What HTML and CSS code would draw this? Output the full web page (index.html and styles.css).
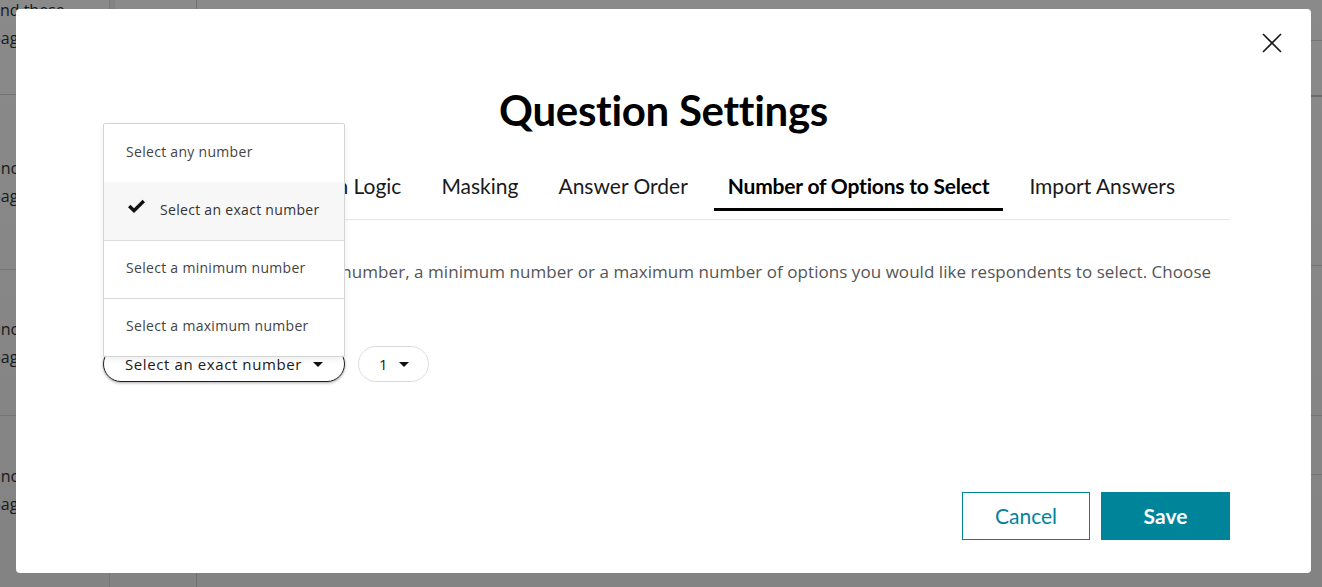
FILE: index.html
```html
<!DOCTYPE html>
<html lang="en">
<head>
<meta charset="utf-8">
<title>Question Settings</title>
<link rel="stylesheet" href="styles.css">
</head>
<body>
<div class="page">
  <div class="col col-a">
    <div class="cell cell-0"><p>and these</p><p>page</p></div>
    <div class="cell cell-1"><p>once</p><p>page</p></div>
    <div class="cell cell-2"><p>once</p><p>page</p></div>
    <div class="cell cell-3"><p>once</p><p>page</p></div>
  </div>
  <div class="col col-strip"></div>
  <div class="col col-b"></div>
  <div class="col col-c">
    <div class="rrow r0"></div>
    <div class="rrow r1"></div>
    <div class="rrow r2"></div>
    <div class="rrow r3"></div>
    <div class="rrow r4"></div>
  </div>
</div>
<div class="overlay"></div>

<div class="modal">
  <button class="close" aria-label="Close">
    <svg width="20" height="20" viewBox="0 0 20 20"><path d="M1 1 L19 19 M19 1 L1 19" stroke="#1a1a1a" stroke-width="1.6" fill="none"/></svg>
  </button>
  <h1 class="title">Question Settings</h1>
  <nav class="tabs">
    <span class="tab">Validation</span>
    <span class="tab">Option Logic</span>
    <span class="tab">Masking</span>
    <span class="tab">Answer Order</span>
    <span class="tab active">Number of Options to Select</span>
    <span class="tab">Import Answers</span>
  </nav>
  <p class="desc">Specify if you'd want an exact number, a minimum number or a maximum number of options you would like respondents to select. Choose<br>from the options below.</p>
  <div class="selects">
    <button class="pill pill-main">Select an exact number <span class="caret"></span></button>
    <button class="pill pill-num">1 <span class="caret"></span></button>
  </div>
  <div class="footer">
    <button class="btn btn-cancel">Cancel</button>
    <button class="btn btn-save">Save</button>
  </div>
  <ul class="menu">
    <li class="item">Select any number</li>
    <li class="item selected"><svg class="check" width="19" height="15" viewBox="0 0 19 15"><path d="M1 8.2 L3.4 5.8 L7 9.2 L15.6 0.8 L18 3.2 L7 14 Z" fill="#111"/></svg>Select an exact number</li>
    <li class="item">Select a minimum number</li>
    <li class="item">Select a maximum number</li>
  </ul>
</div>
</body>
</html>
```

FILE: styles.css
```css
* { box-sizing: border-box; }

body {
  margin: 0;
  width: 1322px;
  height: 587px;
  overflow: hidden;
  position: relative;
  font-family: "Open Sans", "Liberation Sans", sans-serif;
  background: #fff;
}

/* underlying page */
.page {
  display: flex;
  height: 587px;
  background: linear-gradient(#ffffff, #f2f2f2);
}
.col { height: 100%; }
.col-a { width: 109px; display: flex; flex-direction: column; overflow: hidden; }
.col-strip { width: 6px; background: #f3f3f3; border-left: 1px solid #dcdcdc; }
.col-b { width: 82px; border-right: 1px solid #d0d0d0; }
.col-c { flex: 1; display: flex; flex-direction: column; }

.cell { border-bottom: 1px solid #d6d6d6; display: flex; flex-direction: column; justify-content: center; gap: 8px; }
.cell p { margin: 0 0 0 -9px; font-size: 16px; line-height: 20px; color: #333; white-space: nowrap; font-family: "Open Sans", sans-serif; }
.cell-0 { height: 95px; justify-content: flex-start; }
.cell-1 { height: 175px; }
.cell-2 { height: 146px; }
.cell-3 { flex: 1; border-bottom: 0; justify-content: flex-start; padding-top: 50px; }

.rrow { border-bottom: 1px solid #d6d6d6; }
.r0 { height: 41px; }
.r1 { height: 56px; border-bottom: 2px solid #c8c8c8; }
.r2 { height: 169px; }
.r3 { height: 150px; }
.r4 { height: 59px; }

.overlay {
  position: absolute;
  inset: 0;
  background: rgba(0, 0, 0, 0.46);
}

/* modal */
.modal {
  position: absolute;
  left: 16px;
  top: 9px;
  width: 1295px;
  height: 564px;
  background: #fff;
  border-radius: 4px;
  padding: 77px 81px 33px 87px;
  display: flex;
  flex-direction: column;
}

.close {
  position: absolute;
  top: 24px;
  right: 29px;
  width: 20px;
  height: 20px;
  padding: 0;
  border: 0;
  background: none;
  display: flex;
}

.title {
  margin: 0 -81px 0 -87px;
  text-align: center;
  font-family: "Lato", sans-serif;
  font-weight: 700;
  font-size: 42px;
  line-height: 48px;
  color: #000;
  letter-spacing: -0.3px;
}

.tabs {
  margin-top: 38px;
  display: flex;
  justify-content: flex-end;
  gap: 12px;
  padding: 0 41px 8px 0;
  border-bottom: 1px solid #e6e6e6;
}
.tab {
  font-family: "Lato", sans-serif;
  font-size: 21px;
  line-height: 28px;
  color: #1a1a1a;
  padding: 0 14px 8px;
  border-bottom: 3px solid transparent;
  white-space: nowrap;
}
.tab.active {
  font-weight: 700;
  color: #000;
  letter-spacing: -0.2px;
  border-bottom-color: #000;
}

.desc {
  margin: 38px 0 0;
  font-size: 17px;
  letter-spacing: 0.05px;
  line-height: 28px;
  color: #555;
}

.selects {
  margin-top: 32px;
  display: flex;
  gap: 13px;
}
.pill {
  height: 36px;
  border-radius: 18px;
  background: #fff;
  font-family: "Open Sans", sans-serif;
  font-size: 15px;
  color: #1a1a1a;
  display: flex;
  align-items: center;
  gap: 11px;
  letter-spacing: 0.6px;
}
.pill-main {
  width: 242px;
  padding: 0 20px 0 21px;
  border: 1px solid #222;
  box-shadow: 0 1px 3px rgba(0, 0, 0, 0.35);
}
.pill-num {
  width: 71px;
  padding: 0 0 0 20px;
  border: 1px solid #dcdcdc;
}
.caret {
  width: 0;
  height: 0;
  border-left: 5px solid transparent;
  border-right: 5px solid transparent;
  border-top: 5px solid #111;
}

.footer {
  margin-top: auto;
  display: flex;
  justify-content: flex-end;
  gap: 11px;
}
.btn {
  height: 48px;
  width: 129px;
  padding: 0 0 2px;
  font-family: "Lato", sans-serif;
  font-size: 21px;
  border-radius: 0;
}
.btn-cancel {
  width: 128px;
  background: #fff;
  border: 1px solid #00849a;
  color: #00849a;
}
.btn-save {
  background: #00849a;
  border: 1px solid #00849a;
  color: #fff;
  font-weight: 700;
}

/* dropdown menu */
.menu {
  position: absolute;
  left: 87px;
  top: 114px;
  width: 242px;
  margin: 0;
  padding: 0;
  list-style: none;
  background: #fff;
  border: 1px solid #d4d4d4;
  border-radius: 2px;
  box-shadow: 0 2px 6px rgba(0, 0, 0, 0.08);
}
.item {
  height: 58px;
  display: flex;
  align-items: center;
  padding: 0 0 4px 22px;
  font-size: 14px;
  letter-spacing: 0.3px;
  color: #444;
  border-top: 1px solid #dcdcdc;
}
.item:first-child, .item.selected { border-top: 0; }
.item.selected {
  background: #f7f7f7;
  padding-left: 23px;
  color: #333;
}
.check { margin-right: 14px; margin-top: -6px; }
```
